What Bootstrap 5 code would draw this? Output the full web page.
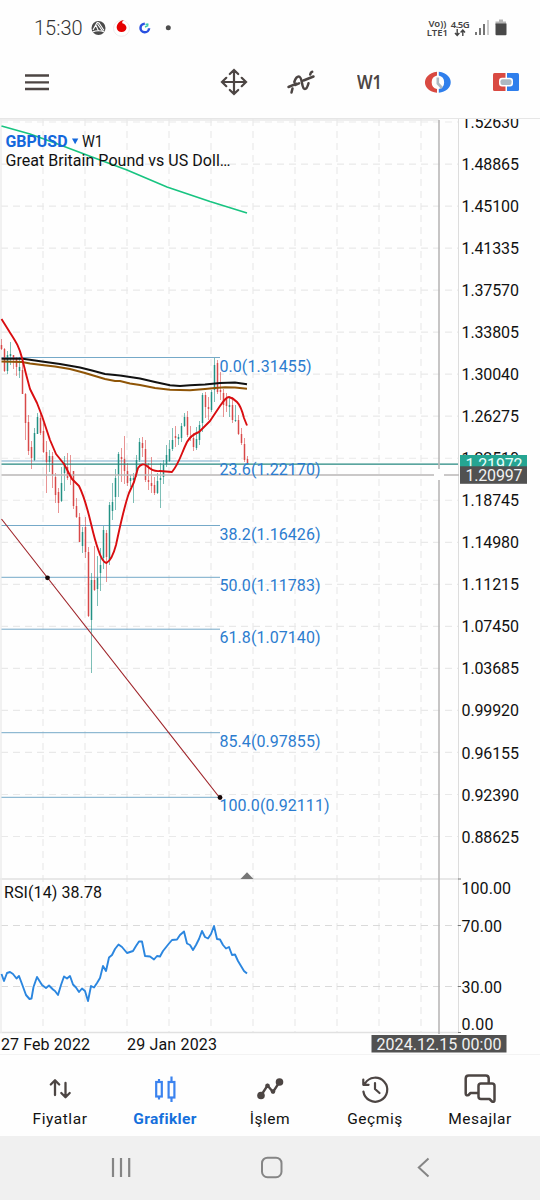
<!DOCTYPE html>
<html lang="tr">
<head>
<meta charset="utf-8">
<meta name="viewport" content="width=device-width, initial-scale=1">
<title>GBPUSD W1</title>
<link href="https://cdn.jsdelivr.net/npm/bootstrap@5.3.0/dist/css/bootstrap.min.css" rel="stylesheet">
<style>
body{font-family:Roboto,sans-serif;background:#fefefe;color:#111;width:540px;height:1200px;overflow:hidden}
.statusbar{height:56px;padding-left:34px;padding-right:33px;color:#555}
.clock{font-size:20px;line-height:24px;width:57px;font-weight:300;color:#333}
.net{font:600 9.5px/9px "Noto Sans",sans-serif;text-align:center;color:#444}
.net-tech{width:20px;margin-left:2px;margin-right:3px;white-space:nowrap;letter-spacing:-.5px}
.toolbar{height:63px;display:grid;grid-template-columns:74px 126px 67px 68px 69px 68px 68px;border-bottom:1px solid #e6e6e6;padding-bottom:10px}
.tf{font:600 19px/24px "Noto Sans",sans-serif;color:#4c4543}
.tf span{display:inline-block;transform:scaleX(.86)}
.chart text{font-size:16px}
.tabs{height:82px;padding:0 7.5px;border-top:1px solid #f3f3f3}
.tab-item{width:105px;font-size:15.5px;line-height:20px;letter-spacing:.55px;padding-top:16px;color:#111;text-decoration:none}
.tab-item svg{height:36px;display:block;margin:0 auto;position:relative;left:-.5px}
.tab-item span{display:block;margin-top:2px}
.tab-item.current{color:#1570dc;font-weight:700;letter-spacing:.35px}
.sysnav{height:64px;background:#f0f0f0;padding:0 45px 0 45px}
</style>
</head>
<body class="d-flex flex-column">
<header class="statusbar d-flex align-items-center">
  <div class="clock">15:30</div>
  <svg width="90" height="24" viewBox="91 16 90 24">
    <circle cx="98.5" cy="28" r="7" fill="#4a4a4a"/>
    <path d="M93 30L96.500 23.500Q97.500 22 99 23L104 30.500M97.500 24L102.500 31M96 25.500L98.500 31" fill="none" stroke="#fff" stroke-width="1.100"/>
    <path d="M92.500 32q6-2.500 12 0" stroke="#fff" stroke-width="1.100" fill="none"/>
    <circle cx="121.500" cy="28.300" r="8" fill="#fff" stroke="#e9e9e9" stroke-width=".8"/>
    <path d="M124.500 20c-2 .4-2.500 1.800-2.200 3.200 2 .5 4.200 2 4.200 4.700a5 5 0 0 1-9.800 0c-.2-3.800 3.200-7.800 7.800-7.900z" fill="#e60000"/>
    <path d="M144.800 23.700a4.300 4.300 0 1 0 4.300 4.500" fill="none" stroke="#2850e0" stroke-width="2.500"/>
    <path d="M145.500 24.500l2.200-.5.300 1.500M145 27l3.200-1.500" stroke="#3ecbb0" stroke-width="1.400" fill="none"/>
    <circle cx="168.300" cy="27.800" r="2.500" fill="#4d4d4d"/>
  </svg>
  <div class="ms-auto d-flex align-items-center">
    <div class="net">Vo))<br>LTE1</div>
    <div class="net net-tech">4.5G
      <svg width="12" height="8" viewBox="0 0 12 8" class="d-block mx-auto"><path d="M3.200 0v6M1 4l2.200 2.500L5.400 4M8.800 7V1M6.600 3.500L8.800 1 11 3.500" fill="none" stroke="#444" stroke-width="1.400"/></svg>
    </div>
    <svg width="34" height="20" viewBox="473 18 34 20">
      <path d="M476 32v3M480 28v7M484 24v11" stroke="#4a4a4a" stroke-width="1.500"/>
      <path d="M488 20v15" stroke="#bbb" stroke-width="1.500"/>
      <path d="M499 19.500h4v2h3V25H495.500v-3.500H499z" fill="#b5b5b5"/>
      <path d="M495.500 23.500h11v10.700q0 1-1 1h-9q-1 0-1-1z" fill="#484848"/>
    </svg>
  </div>
</header>
<nav class="toolbar align-items-center">
  <svg width="74" height="34" viewBox="0 65 74 34"><path d="M25 75.500h24M25 82.300h24M25 89h24" stroke="#4c4543" stroke-width="2.300"/></svg>
  <span></span>
  <svg width="67" height="34" viewBox="200 65 67 34" fill="none" stroke="#4c4543" stroke-width="2.200"><path d="M234 71v22M223 82h22M229.800 74l4.200-4 4.200 4M229.800 90l4.200 4 4.200-4M226.300 77.800L222 82l4.300 4.200M241.700 77.800l4.300 4.200-4.300 4.200" stroke-linecap="round"/></svg>
  <svg width="68" height="34" viewBox="267 65 68 34" fill="none" stroke="#4c4543" stroke-width="2.500" stroke-linecap="round"><path d="M288.500 87l8-3.300M303.500 80.500l10-4M291.500 92.500l1-4M294.300 82c1.200-3.600 2.800-5.500 4.400-5.500 4.200 0 2.400 12.500 6.200 12.500 1.800 0 2.600-2 3.600-5.800M310.200 74.500c.3-1.600.8-2.500 2-2.800M295 85l4-1.600"/></svg>
  <div class="tf text-center"><span>W1</span></div>
  <svg width="68" height="34" viewBox="404 65 68 34"><path d="M437 71.800v3.600a7 7 0 0 0 0 13.600v3.800c-15-1.200-17-18.600 0-21z" fill="#d94a42"/><path d="M438.800 71.800v3.600a7 7 0 0 1 0 13.600v3.800c15-1.200 17-18.600 0-21z" fill="#2f7fec"/><path d="M437.800 77.500v6l4.200 4.500" fill="none" stroke="#adb9c3" stroke-width="2.600"/></svg>
  <svg width="68" height="34" viewBox="472 65 68 34"><path d="M505.500 73h-11q-1.500 0-1.500 1.500v15q0 1.500 1.500 1.500h11z" fill="#d94a42"/><path d="M507 73h10.500q1.500 0 1.500 1.500v15q0 1.500-1.500 1.500H507z" fill="#2f7fec"/><rect x="499" y="77.800" width="14" height="8.800" rx="3" fill="#fff"/><rect x="500.500" y="79.300" width="11" height="5.800" rx="2" fill="#adb9c3"/></svg>
</nav>
<main>
<svg class="chart d-block" width="540" height="935" viewBox="0 119 540 935" fill="none">
  <g id="grid" stroke="#e9e9e9" stroke-width="1.200" stroke-dasharray="7 5"></g>
  <path d="M0 120h439" stroke="#e9e9e9" stroke-width="1.500"/>
  <path d="M0 879h459M0 1032.500h459" stroke="#e1e1e1" stroke-width="1.500"/>
  <path d="M1 119v914" stroke="#ececec" stroke-width="1.500"/>
  <path d="M458.500 119v914" stroke="#ddd"/>
  <g id="fib" stroke="#75a9c8" stroke-width="1"></g>
  <g id="candles"></g>
  <path d="M1.500 464.200H458" stroke="#25877f" stroke-width="1.300"/>
  <path d="M1.500 475H434M444 475h15M439 120v349M439 480v554" stroke="#b9b7b7" stroke-width="1.600"/>
  <path d="M1.500 126L30 134 55 143 92 157 127 170 167 187 210 201.500 247 213" stroke="#18c481" stroke-width="1.700"/>
  <path d="M1.500 361.500L22 362 30 363.500 42 365 55 366.500 70 369 85 373 95 376 105 379 115 381 120 381 130 383.500 140 385 155 388 170 389.700 190 390.200 205 389 215 388 225 387.200 235 387.500 247 388.800" stroke="#8f5507" stroke-width="2"/>
  <path d="M1.500 358.700L23 358.700 42 361.500 60 364 80 367.500 92 370.500 105 374 120 375.500 140 378.500 155 382 170 385.200 180 386 190 385.300 205 384.500 220 383 235 382.500 247 384.200" stroke="#111" stroke-width="2.100"/>
  <path d="M1.500 319L9 331C16 342 19 346 22 358L26 374 30 389 37 403 42 416 50 440 56 454 64 464 72 479 79 486C89 506 91 530 98 549Q102 562 106.500 563Q112 560 116 545C121 522 124 507 129 493L134 482 138 468Q142 462 147 466Q153 472 160 471L172 472C180 462 181 454 187 442Q191 435 199 432L210 421 220 406Q226 397 229 397Q233 398 237 402Q241 406 244 418L247 425.500" stroke="#d90d10" stroke-width="1.900" stroke-linejoin="round"/>
  <path d="M1.500 519L219.500 797.500" stroke="#9e2228" stroke-width="1.100"/>
  <circle cx="47.500" cy="577.800" r="2.400" fill="#160707"/><circle cx="220" cy="797.500" r="2.400" fill="#160707"/>
  <path d="M240.500 879l6.500-6.800 6.500 6.800z" fill="#777"/>
  <path d="M1.500 974L4 981 7 973 10 972 13 974 16.500 978.500 19 976 22 984 26 995 29.500 999 31.500 998.500 33.500 987 37 977 42 985 46 988 49 985.500 53 989.500 55 991 58 995 61 985 64 976.500 67 978.500 70 976 73 984.500 76 987.500 79 992 82 988.500 85 991 88 1001 91 986 94 987.500 97 983 100 978 103 966 106 971 109 957.500 112 955 115 949 118.500 944.500 122 947 127 953 133 951 136 946 139 941.500 142 941.500 145 956 150 956.500 154 959.500 157 956 160 956.500 163 951 169 943.500 172 940 177 939.500 180 935 184 931.500 187 943.500 190 945 193 950 196 945 199 939 202 931 205 937 208 938.500 211 934 214 926 217 939 220 939.500 223 945 226 948.500 229 947 232 955 235 954.500 238 961 241 966 244 971 247 973.500" stroke="#2b86df" stroke-width="1.900" stroke-linejoin="round"/>
  <g fill="#111">
    <text x="5.500" y="147" fill="#1468dc" style="font-weight:700" textLength="62" lengthAdjust="spacingAndGlyphs">GBPUSD</text>
    <path d="M72 138.500h6.300l-3.150 5.700z" fill="#1468dc"/>
    <text x="82" y="147" textLength="21" lengthAdjust="spacingAndGlyphs">W1</text>
    <text x="5.500" y="166" textLength="225">Great Britain Pound vs US Doll…</text>
    <text x="4" y="898" textLength="98">RSI(14) 38.78</text>
    <text x="1" y="1050" textLength="89">27 Feb 2022</text>
    <text x="127" y="1050" textLength="90">29 Jan 2023</text>
    <text x="461.500" y="894" textLength="49.500">100.00</text>
    <text x="461.500" y="931.500" textLength="40.500">70.00</text>
    <text x="461.500" y="992.500" textLength="40.500">30.00</text>
    <text x="461.500" y="1029.500" textLength="32">0.00</text>
  </g>
  <g id="prices" fill="#111"></g>
  <g id="levels" fill="#2c7ccf"></g>
  <rect x="460" y="455" width="67" height="12" fill="#25a592"/>
  <svg x="460" y="455" width="67" height="11.500"><text x="5.500" y="14.500" fill="#e9fffb" textLength="57">1.21972</text></svg>
  <rect x="460" y="466.300" width="67" height="17.500" fill="#515151"/>
  <text x="465.500" y="480.700" fill="#f2f2f2" textLength="57">1.20997</text>
  <rect x="371.500" y="1035" width="135" height="17.500" fill="#515151"/>
  <text x="376.500" y="1049.700" fill="#f2f2f2" textLength="125">2024.12.15 00:00</text>
</svg>
</main>
<nav class="tabs d-flex text-center">
  <a class="tab-item"><svg width="40" viewBox="40 1072 40 36" fill="none" stroke="#4c4543" stroke-width="2.300" stroke-linecap="round" stroke-linejoin="round"><path d="M55 1096v-14M50.800 1085.500l4.200-4.200 4.200 4.200M65.500 1084v14M61.300 1094l4.200 4.200 4.200-4.200"/></svg><span>Fiyatlar</span></a>
  <a class="tab-item current"><svg width="40" viewBox="145 1072 40 36" fill="none" stroke="#3b83ef" stroke-width="2.200"><path d="M159 1080v3M159 1097v3.500M171.500 1077.500v5M171.500 1098.500v4.500"/><rect x="156.200" y="1083" width="5.600" height="14.500"/><rect x="168.600" y="1083" width="5.800" height="15.500"/></svg><span>Grafikler</span></a>
  <a class="tab-item"><svg width="40" viewBox="250 1072 40 36"><path d="M261 1096.500l6.500-10 5.500 6.500 6.500-10" fill="none" stroke="#4c4543" stroke-width="2.300"/><g fill="#4c4543"><circle cx="261" cy="1096.500" r="3.800"/><circle cx="279.500" cy="1083" r="3.800"/><circle cx="267.500" cy="1086.800" r="2.300"/><circle cx="273" cy="1092.500" r="2.300"/></g></svg><span>İşlem</span></a>
  <a class="tab-item"><svg width="40" viewBox="355 1072 40 36" fill="none" stroke="#4c4543" stroke-width="2.200" stroke-linecap="round" stroke-linejoin="round"><path d="M365 1084.500a12 12 0 1 1-1.600 8M363.300 1080.500v5.300h5.300M375 1084v6l4.500 4"/></svg><span>Geçmiş</span></a>
  <a class="tab-item"><svg width="40" viewBox="460 1072 40 36" fill="none" stroke="#4c4543" stroke-width="2.500" stroke-linejoin="round"><path d="M478 1094h-7.500l-2 2q-2.800 1.200-2.800-1.500v-15q0-3 3-3h17q3 0 3 3v5"/><path d="M481 1084.500h11q2.500 0 2.500 2.500v14q0 2.500-2.500 1.500l-2.500-2.500H481q-2.500 0-2.500-2.500v-10.500q0-2.500 2.500-2.500z"/></svg><span>Mesajlar</span></a>
</nav>
<footer class="sysnav d-flex align-items-center">
  <svg width="450" height="40" viewBox="45 1148 450 40" fill="none" stroke="#858585" stroke-width="2"><path d="M113 1158v19M121 1158v19M129.200 1158v19" stroke-width="2.200"/><rect x="262" y="1157.700" width="19.500" height="19.500" rx="5.500"/><path d="M428.500 1158.500l-9.700 9 9.700 9"/></svg>
</footer>
<script>
const add = (id, html) => { document.getElementById(id).innerHTML = html; };

// Grid: one vertical line every 14 weeks, one horizontal per price label
let grid = '';
for (let x = 43; x < 458; x += 42) grid += `<path d="M${x} 119V1032"/>`;
for (let i = 0; i < 18; i++) grid += `<path d="M1 ${122 + i * 42.03}H458"/>`;
grid += '<path d="M1 925.500H458M1 986.500H458" stroke="#dadada"/>';
add('grid', grid);

const prices = ['1.52630','1.48865','1.45100','1.41335','1.37570','1.33805','1.30040','1.26275','1.22510','1.18745','1.14980','1.11215','1.07450','1.03685','0.99920','0.96155','0.92390','0.88625'];
add('prices', prices.map((p, i) => `<text x="461.500" y="${(128 + i * 42.03).toFixed(1)}" textLength="57.500">${p}</text>`).join('') +
  '<path d="M458 879h3M458 925.500h3M458 986.500h3M458 1032.500h3" stroke="#777"/>');

const levels = [[357.5,'0.0(1.31455)',92],[461,'23.6(1.22170)',101],[525.5,'38.2(1.16426)',101],[577.3,'50.0(1.11783)',101],[629.2,'61.8(1.07140)',101],[732.7,'85.4(0.97855)',101],[797.3,'100.0(0.92111)',110]];
add('fib', levels.map(l => `<path d="M1.500 ${l[0]}H220"/>`).join(''));
add('levels', levels.map(l => `<text x="219.500" y="${l[0] + 14}" textLength="${l[2]}">${l[1]}</text>`).join(''));

// Weekly candles: direction, wick top, wick bottom, body top, body bottom
const candles = `r339,350,345,349 r348,372,349,371 g351,374,355,371 g342,365,354,356 r355,369,355,359 r357,376,359,367 g357,378,367,371 r363,394,370,394
r393,440,394,423 r415,455,422,451 r441,469,447,458 g428,461,433,460 g413,434,417,434 r412,435,418,433 r423,453,431,452 r441,493,452,462 g450,472,456,462 r452,488,456,475
r473,503,477,495 r488,513,492,503 g467,502,483,501 g456,491,463,473 r453,480,467,478 r455,485,475,477 r471,509,471,506 r498,518,506,517 r513,542,517,542 g527,553,532,546
r517,558,527,552 r547,617,552,616 g573,673,580,620 r546,591,580,590 g556,606,578,589 g548,591,565,573 g526,569,530,558 r530,582,533,557 g502,565,505,560 g483,520,502,511
g469,510,478,497 g452,497,454,475 r448,482,457,459 r436,484,459,471 r463,486,471,483 g475,487,478,481 g473,503,478,480 g455,477,460,475 g438,462,442,460 r437,457,443,448
r440,482,449,480 r463,490,480,482 r457,493,483,486 r477,495,485,493 g473,494,481,493 g463,508,478,480 g460,484,465,477 g445,467,455,464 g440,462,449,461 g428,451,440,449
r426,447,436,438 g434,445,437,439 g423,442,426,438 g413,427,417,426 r411,437,417,435 r426,441,436,438 r433,451,438,447 g427,450,439,448 g421,445,425,440 g393,432,395,423
r392,418,395,407 r397,420,407,409 g390,412,392,410 g358,402,365,390 r360,394,363,392 r372,400,390,392 r389,417,393,405 r393,412,398,406 g397,417,405,407 r397,423,405,420
g405,422,420,421 r415,435,420,434 r428,445,434,443 r438,462,444,460 r456,464,459,463`.split(/\s+/);
add('candles', candles.map((c, k) => {
  const [t, b, o, e] = c.slice(1).split(',').map(Number);
  const x = (1.5 + 3 * k);
  const col = c[0] === 'g' ? '#229184' : '#d84848';
  return `<path d="M${x} ${t}V${b}" stroke="${col}" stroke-opacity=".65" stroke-width=".9"/><path d="M${x} ${o}V${e}" stroke="${col}" stroke-width="1.500"/>`;
}).join(''));
</script>
<script src="https://cdn.jsdelivr.net/npm/bootstrap@5.3.0/dist/js/bootstrap.bundle.min.js"></script>
</body>
</html>
